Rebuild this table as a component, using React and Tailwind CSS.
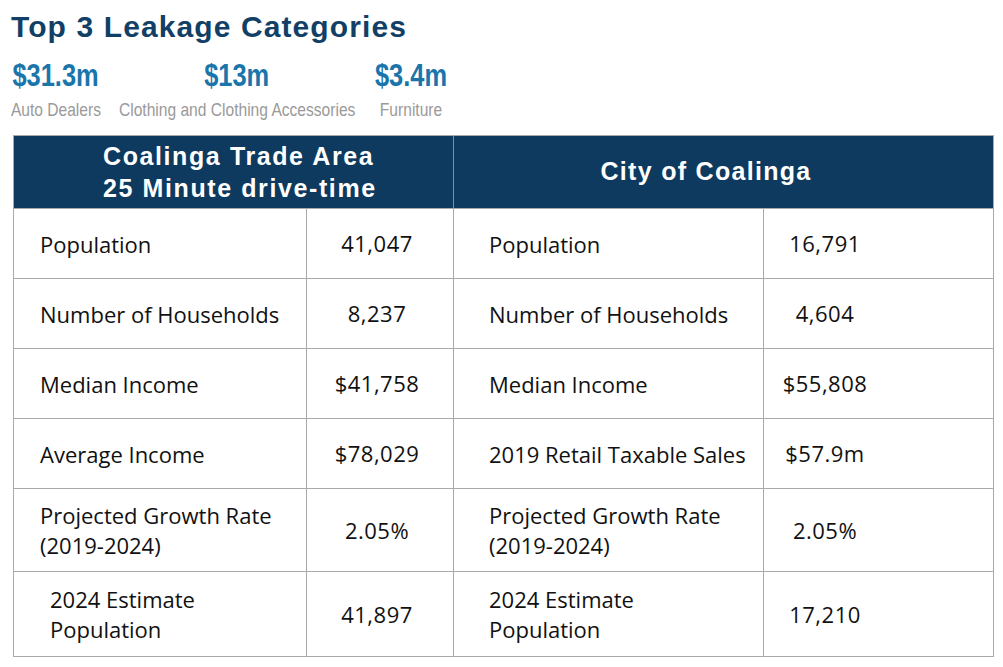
import React from 'react';

const leakage = [
  { amount: '$31.3m', label: 'Auto Dealers' },
  { amount: '$13m', label: 'Clothing and Clothing Accessories' },
  { amount: '$3.4m', label: 'Furniture' },
];

const rows = [
  { h: 'h-[70px]', a: ['Population'], av: '41,047', b: ['Population'], bv: '16,791' },
  { h: 'h-[70px]', a: ['Number of Households'], av: '8,237', b: ['Number of Households'], bv: '4,604' },
  { h: 'h-[70px]', a: ['Median Income'], av: '$41,758', b: ['Median Income'], bv: '$55,808' },
  { h: 'h-[70px]', a: ['Average Income'], av: '$78,029', b: ['2019 Retail Taxable Sales'], bv: '$57.9m' },
  { h: 'h-[83px]', a: ['Projected Growth Rate', '(2019-2024)'], av: '2.05%', b: ['Projected Growth Rate', '(2019-2024)'], bv: '2.05%' },
  { h: 'h-[85px]', a: ['2024 Estimate', 'Population'], av: '41,897', b: ['2024 Estimate', 'Population'], bv: '17,210', indent: true },
];

const Lines = ({ lines, className }) => (
  <div className={`flex flex-col justify-center leading-[30px] ${className}`}>
    {lines.map((l) => (
      <span key={l}>{l}</span>
    ))}
  </div>
);

export default function App() {
  return (
    <div className="w-[1003px] h-[667px] bg-white overflow-hidden" style={{ fontFamily: '"Liberation Sans", Arial, sans-serif' }}>
      <div className="pl-[11px] pt-[10px]">
        <h1 className="text-[30px] leading-[34px] font-bold tracking-[1.1px] text-[#123f66]">Top 3 Leakage Categories</h1>
      </div>

      {/* leakage amounts, condensed */}
      <div className="flex mt-[16px] h-[62px]">
        {leakage.map((item, i) => (
          <div
            key={item.label}
            className={`flex flex-col items-center ${i === 0 ? 'w-[92px] ml-[10px]' : i === 1 ? 'w-[242px] ml-[14px]' : 'w-[62px] ml-[22px]'}`}
          >
            <span className="text-[31px] leading-[32px] font-bold text-[#1a75aa] whitespace-nowrap scale-x-[0.82]">{item.amount}</span>
            <span className="text-[19px] leading-[22px] mt-[7px] text-[#9a9a9a] whitespace-nowrap scale-x-[0.82]">{item.label}</span>
          </div>
        ))}
      </div>

      {/* table */}
      <div className="ml-[13px] mt-[13px] w-[981px] border border-[#aaaaaa]">
        <div className="flex h-[72px] bg-[#0d3a5e] text-white font-bold text-[25px] tracking-[1.6px]">
          <div className="w-[440px] flex flex-col justify-center items-start pl-[89px] leading-[32px] border-r border-[#7f8fa0]">
            <span>Coalinga Trade Area</span>
            <span>25 Minute drive-time</span>
          </div>
          <div className="flex-1 flex items-center justify-center pr-[35px] tracking-[1.3px]">City of Coalinga</div>
        </div>
        <div className="text-[22px] text-[#111]" style={{ fontFamily: '"Open Sans", Lato, sans-serif' }}>
          {rows.map((r, i) => (
            <div key={i} className={`flex ${r.h} border-t border-[#aaaaaa]`}>
              <div className="w-[293px] flex items-center border-r border-[#aaaaaa]">
                <Lines lines={r.a} className={r.indent ? 'pl-[36px]' : 'pl-[26px]'} />
              </div>
              <div className="w-[147px] flex items-center justify-center border-r border-[#aaaaaa]">
                <span className="-ml-[6px] tracking-[0.5px]">{r.av}</span>
              </div>
              <div className="w-[310px] flex items-center border-r border-[#aaaaaa]">
                <Lines lines={r.b} className="pl-[35px]" />
              </div>
              <div className="flex-1 flex items-center">
                <span className="w-[122px] text-center tracking-[0.5px]">{r.bv}</span>
              </div>
            </div>
          ))}
        </div>
      </div>
    </div>
  );
}
